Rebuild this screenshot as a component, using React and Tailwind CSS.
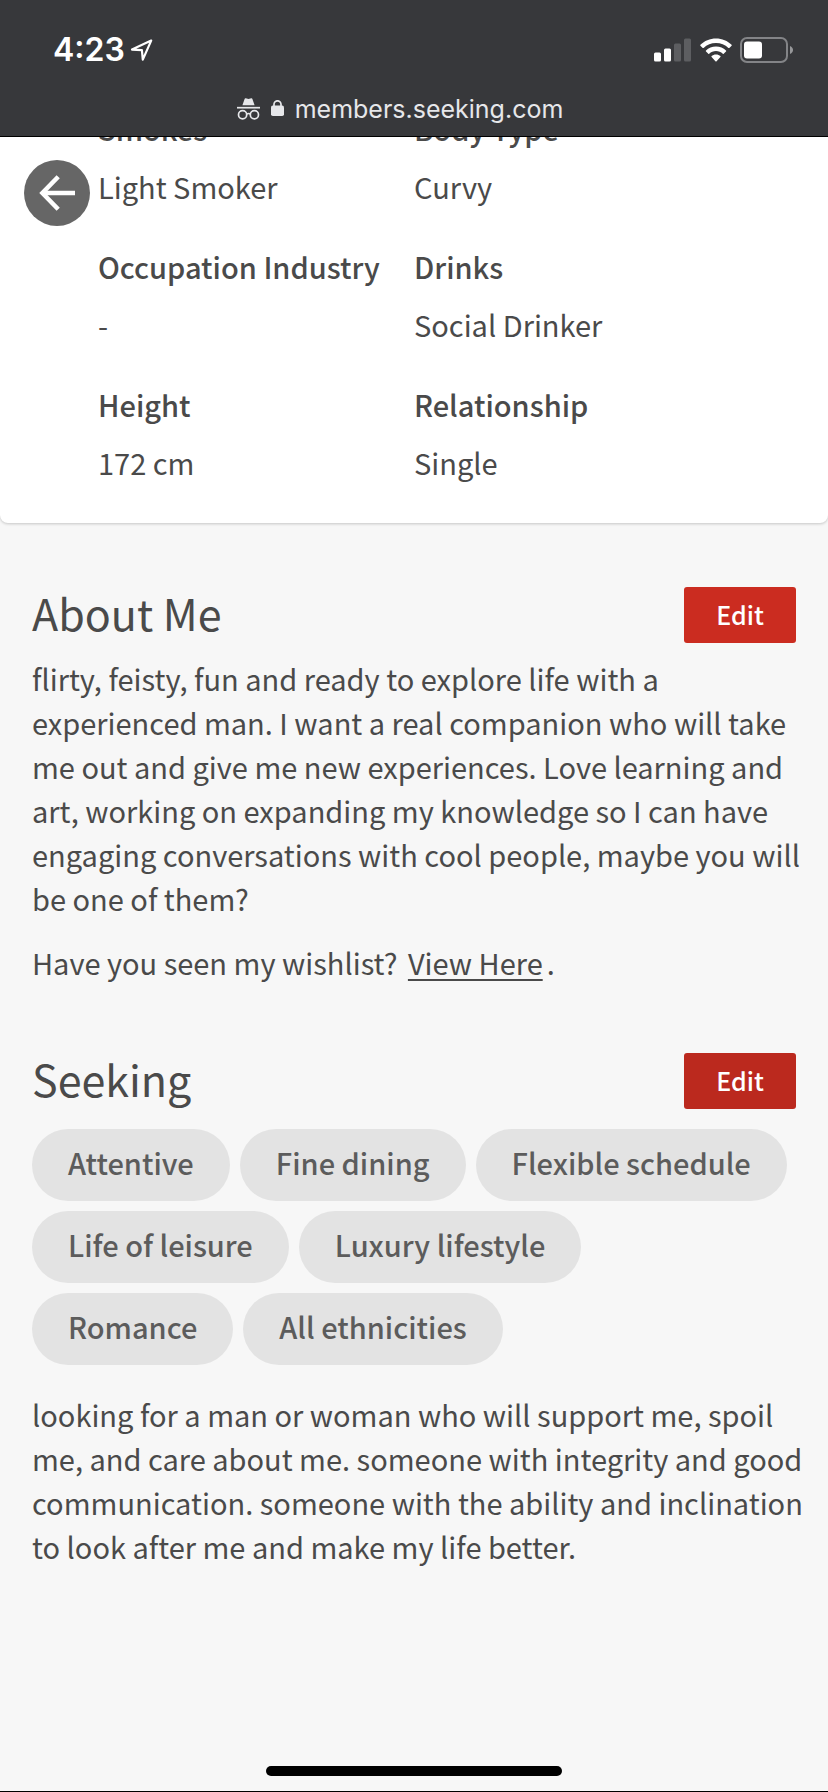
const details = [
  [
    { label: 'Smokes', value: 'Light Smoker' },
    { label: 'Body Type', value: 'Curvy' },
  ],
  [
    { label: 'Occupation Industry', value: '-' },
    { label: 'Drinks', value: 'Social Drinker' },
  ],
  [
    { label: 'Height', value: '172 cm' },
    { label: 'Relationship', value: 'Single' },
  ],
];

const tags = [
  'Attentive',
  'Fine dining',
  'Flexible schedule',
  'Life of leisure',
  'Luxury lifestyle',
  'Romance',
  'All ethnicities',
];

function LocationIcon() {
  return (
    <svg className="h-6 w-6" viewBox="0 0 24 24" fill="none" stroke="#fff" strokeWidth="2.2" strokeLinejoin="round" aria-hidden="true">
      <path d="M21.2 2.6 L2 11.6 L11.9 12.2 L12.8 21.6 Z" />
    </svg>
  );
}

function SignalIcon() {
  return (
    <svg className="h-6 w-[38px]" viewBox="0 0 38 24" aria-hidden="true">
      <rect x="0" y="14.5" width="7" height="9" rx="1.5" fill="#fff" />
      <rect x="10" y="10.5" width="7" height="13" rx="1.5" fill="#fff" />
      <rect x="20" y="5.5" width="7" height="18" rx="1.5" fill="#5d5e61" />
      <rect x="30" y="0.5" width="7" height="23" rx="1.5" fill="#5d5e61" />
    </svg>
  );
}

function WifiIcon() {
  return (
    <svg className="h-6 w-8" viewBox="0 0 32 24" fill="#fff" aria-hidden="true">
      <path d="M16 0.4 C22.1 0.4 27.6 2.8 31.6 6.7 Q32 7.2 31.6 7.7 L29.3 9.9 Q28.9 10.3 28.4 9.9 C25.1 6.8 20.8 5 16 5 C11.2 5 6.9 6.8 3.6 9.9 Q3.1 10.3 2.7 9.9 L0.4 7.7 Q0 7.2 0.4 6.7 C4.4 2.8 9.9 0.4 16 0.4 Z" />
      <path d="M16 8.6 C20 8.6 23.4 10.1 26 12.5 Q26.5 13 26 13.4 L23.7 15.7 Q23.3 16.1 22.8 15.7 C21 14 18.6 13 16 13 C13.4 13 11 14 9.2 15.7 Q8.7 16.1 8.3 15.7 L6 13.4 Q5.5 13 6 12.5 C8.6 10.1 12 8.6 16 8.6 Z" />
      <path d="M16 16.4 C17.8 16.4 19.3 17.1 20.4 18.1 Q20.9 18.6 20.4 19.1 L16.6 23.2 Q16 23.8 15.4 23.2 L11.6 19.1 Q11.1 18.6 11.6 18.1 C12.7 17.1 14.2 16.4 16 16.4 Z" />
    </svg>
  );
}

function BatteryIcon() {
  return (
    <svg className="h-[26px] w-[54px]" viewBox="0 0 54 26" aria-hidden="true">
      <rect x="1" y="1" width="46" height="24" rx="6" fill="none" stroke="#838487" strokeWidth="2" />
      <rect x="4" y="4.5" width="18" height="17" rx="3" fill="#fff" />
      <path d="M50 9 C54 10.5 54 15.5 50 17 Z" fill="#97989a" />
    </svg>
  );
}

function IncognitoIcon() {
  return (
    <svg className="h-[22px] w-[23px]" viewBox="0 0 23 22" fill="none" stroke="#e6e7ea" aria-hidden="true">
      <path d="M5.4 7.2 L7.6 0.9 Q7.9 0 8.8 0.2 L11.5 0.9 L14.2 0.2 Q15.1 0 15.4 0.9 L17.6 7.2 Z" fill="#e6e7ea" stroke="none" />
      <path d="M0 9.7 H23" strokeWidth="1.7" />
      <circle cx="5.6" cy="16.8" r="4.1" strokeWidth="1.7" />
      <circle cx="17.4" cy="16.8" r="4.1" strokeWidth="1.7" />
      <path d="M9.6 16.2 Q11.5 14.8 13.4 16.2" strokeWidth="1.6" />
    </svg>
  );
}

function LockIcon() {
  return (
    <svg className="mb-0.5 h-4 w-[13px]" viewBox="0 0 13 16" aria-hidden="true">
      <rect x="0" y="5.6" width="13" height="10.4" rx="1.8" fill="#e6e7ea" />
      <path d="M3 6.5 V4.3 A3.5 3.5 0 0 1 10 4.3 V6.5" fill="none" stroke="#e6e7ea" strokeWidth="1.7" />
    </svg>
  );
}

function BackArrow() {
  return (
    <svg className="h-9 w-9" viewBox="0 0 36 36" fill="none" stroke="#fff" strokeWidth="4.5" aria-hidden="true">
      <path d="M36 18 H3" />
      <path d="M19.2 1.8 L3.4 18 L19.2 34.2" />
    </svg>
  );
}

function SectionHeader({ title }) {
  return (
    <div className="flex items-start justify-between">
      <h2 className="text-[43px] leading-[50px]">{title}</h2>
      <button
        type="button"
        aria-label={`Edit ${title}`}
        className={`h-14 w-28 rounded-[3px] pb-0.5 text-[25px] font-medium text-white ${
          title === 'Seeking' ? 'bg-[#bb291e]' : 'bg-[#cb2c20]'
        }`}
      >
        Edit
      </button>
    </div>
  );
}

export default function App() {
  return (
    <div className="relative flex min-h-screen flex-col border-b border-black bg-[#f7f7f7] font-['Noto_Sans_CJK_SC','Open_Sans',sans-serif] text-[29px] leading-[44px] text-[#4a4a4a]">
      <header className="border-b border-black bg-[#37383b] pt-7 font-['Inter',sans-serif]">
        <div className="flex h-11 items-center justify-between pr-[34px] pl-[53px]">
          <div className="flex items-center gap-[5px]">
            <span className="text-[32px] font-semibold text-white">4:23</span>
            <LocationIcon />
          </div>
          <div className="flex items-center gap-2">
            <SignalIcon />
            <WifiIcon />
            <BatteryIcon />
          </div>
        </div>
        <div className="flex h-16 items-center justify-center pt-2.5 pr-7">
          <div className="flex items-center gap-[11px]">
            <IncognitoIcon />
            <LockIcon />
            <span className="text-[25px] leading-9 text-[#e6e7ea]">members.seeking.com</span>
          </div>
        </div>
      </header>

      <button
        type="button"
        aria-label="Back"
        className="absolute top-40 left-6 z-10 flex h-[66px] w-[66px] items-center justify-center rounded-full bg-[#666]"
      >
        <BackArrow />
      </button>

      <section className="overflow-hidden rounded-b-lg bg-white px-[98px] pb-[39px] shadow-[0_1px_3px_rgba(0,0,0,0.2)]">
        <dl className="-mt-[31px] flex flex-col gap-9">
          {details.map((row) => (
            <div key={row[0].label} className="grid grid-cols-2">
              {row.map((item) => (
                <div key={item.label} className="flex flex-col gap-3.5">
                  <dt className="font-medium whitespace-nowrap">{item.label}</dt>
                  <dd>{item.value}</dd>
                </div>
              ))}
            </div>
          ))}
        </dl>
      </section>

      <main className="flex flex-1 flex-col px-8 pt-16">
        <section>
          <SectionHeader title="About Me" />
          <p className="mt-[13px] -mr-3">
            flirty, feisty, fun and ready to explore life with a experienced man. I want a real companion who will take
            me out and give me new experiences. Love learning and art, working on expanding my knowledge so I can have
            engaging conversations with cool people, maybe you will be one of them?
          </p>
          <p className="mt-5">
            Have you seen my wishlist?{' '}
            <a href="#wishlist" className="mx-1 underline decoration-2 underline-offset-4">
              View Here
            </a>
            .
          </p>
        </section>

        <section className="mt-[69px]">
          <SectionHeader title="Seeking" />
          <ul className="mt-5 mr-1.5 flex flex-wrap gap-2.5">
            {tags.map((tag) => (
              <li key={tag} className="rounded-full bg-[#e3e3e3] px-9 pt-[11px] pb-[17px] font-medium text-[#5c5c5c]">
                {tag}
              </li>
            ))}
          </ul>
          <p className="mt-[27px] -mr-3">
            looking for a man or woman who will support me, spoil me, and care about me. someone with integrity and
            good communication. someone with the ability and inclination to look after me and make my life better.
          </p>
        </section>

        <div className="mt-auto mb-[15px] h-2.5 w-[296px] self-center rounded-full bg-black" />
      </main>
    </div>
  );
}
